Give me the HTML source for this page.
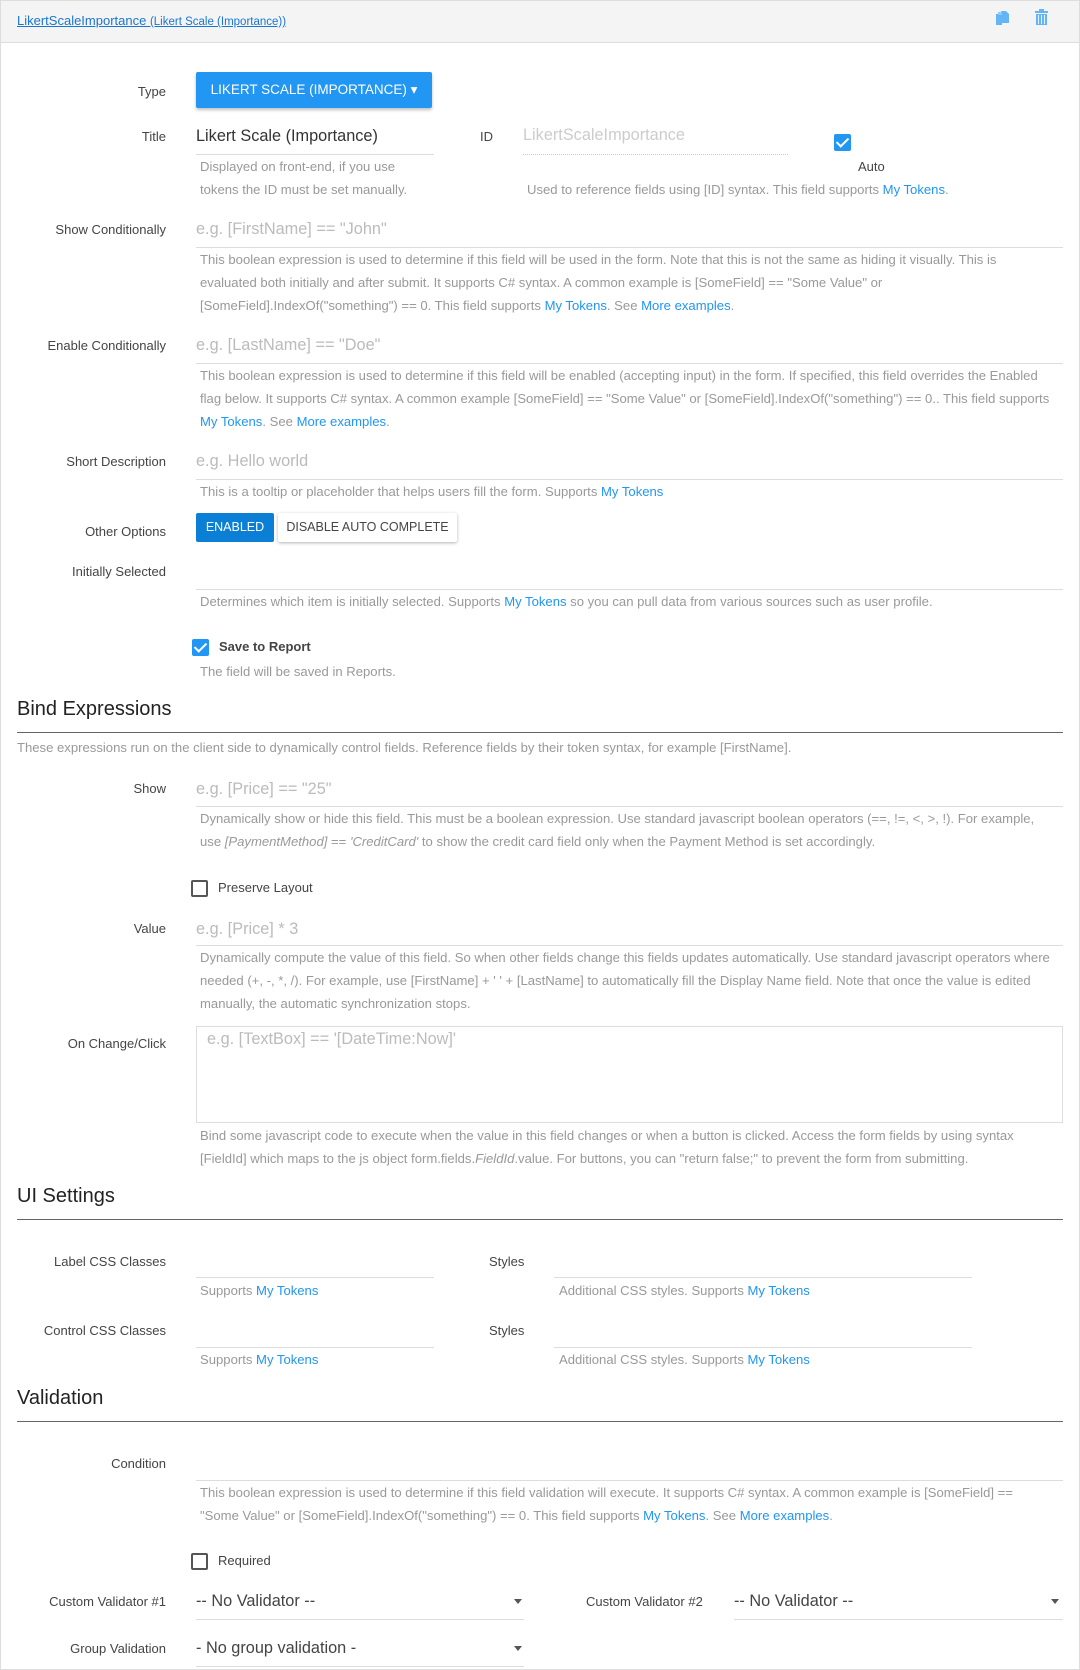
<!DOCTYPE html>
<html><head><meta charset="utf-8"><style>
*{box-sizing:border-box;margin:0;padding:0}
body{width:1080px;height:1670px;position:relative;background:#fff;font-family:"Liberation Sans",sans-serif;overflow:hidden;color:#333}
.a{position:absolute;white-space:nowrap}
.l{position:absolute;right:914px;font-size:13px;color:#444;line-height:16px;white-space:nowrap}
.u{position:absolute;height:1px;background:#ddd}
.p{position:absolute;font-size:16.3px;color:#bbb;line-height:20px;white-space:nowrap}
.h{position:absolute;left:200px;font-size:13.1px;color:#999;line-height:23px;white-space:nowrap}
.h a,.t{color:#2196f3;text-decoration:none}
.sec{position:absolute;left:17px;font-size:20px;color:#222;line-height:24px}
.rule{position:absolute;left:17px;width:1046px;height:1px;background:#666}
.cb{position:absolute;width:17px;height:17px;border:2px solid #555;border-radius:2px}
.cbon{position:absolute;width:17px;height:17px;background:#2196f3;border-radius:2px}
.cbon:after{content:"";position:absolute;left:5px;top:1px;width:5px;height:10px;border:solid #fff;border-width:0 2px 2px 0;transform:rotate(45deg)}
.arr{position:absolute;width:0;height:0;border-left:4px solid transparent;border-right:4px solid transparent;border-top:5px solid #555}
</style></head><body>
<div class="a" style="left:0;top:0;width:1080px;height:1670px;border:1px solid #ddd;border-top:none"></div>
<div class="a" style="left:0;top:0;width:1080px;height:43px;background:#f4f4f4;border:1px solid #ddd"></div>
<div class="a" style="left:17px;top:13px;font-size:13px;color:#1976d2;text-decoration:underline">LikertScaleImportance <span style="font-size:11.5px">(Likert Scale (Importance))</span></div>
<svg class="a" style="left:995px;top:10px" width="14" height="16" viewBox="0 0 14 16"><path d="M1 4h6v11H1z" fill="#64b5f6"/><path d="M6 1h5l3 3v9H6z" fill="#64b5f6"/><path d="M3 2h4v3H3z" fill="#90caf9"/></svg>
<svg class="a" style="left:1035px;top:9px" width="13" height="16" viewBox="0 0 13 16"><path d="M0 2h13v2H0zM4 0h5v2H4zM1 5h11v11H1z" fill="#64b5f6"/><path d="M3.5 6v9M6.5 6v9M9.5 6v9" stroke="#e3f2fd" stroke-width="1"/></svg>

<div class="l" style="top:84px">Type</div>
<div class="a" style="left:196px;top:72px;width:236px;height:36px;background:#2196f3;border-radius:2px;box-shadow:0 2px 3px rgba(0,0,0,.25);color:#fff;font-size:13.5px;line-height:36px;text-align:center">LIKERT SCALE (IMPORTANCE) ▾</div>

<div class="l" style="top:129px">Title</div>
<div class="p" style="left:196px;top:126px;color:#333">Likert Scale (Importance)</div>
<div class="u" style="left:196px;top:154px;width:238px"></div>
<div class="h" style="top:155px">Displayed on front-end, if you use<br>tokens the ID must be set manually.</div>
<div class="a" style="left:480px;top:129px;font-size:13px;color:#444">ID</div>
<div class="p" style="left:523px;top:125px;color:#ccc">LikertScaleImportance</div>
<div class="u" style="left:523px;top:154px;width:265px;background:none;border-top:1px dotted #ccc"></div>
<div class="cbon" style="left:834px;top:134px"></div>
<div class="a" style="left:858px;top:159px;font-size:13px;color:#444">Auto</div>
<div class="h" style="left:527px;top:178px">Used to reference fields using [ID] syntax. This field supports <a>My Tokens</a>.</div>

<div class="l" style="top:222px">Show Conditionally</div>
<div class="p" style="left:196px;top:219px">e.g. [FirstName] == "John"</div>
<div class="u" style="left:196px;top:247px;width:867px"></div>
<div class="h" style="top:248px">This boolean expression is used to determine if this field will be used in the form. Note that this is not the same as hiding it visually. This is<br>evaluated both initially and after submit. It supports C# syntax. A common example is [SomeField] == "Some Value" or<br>[SomeField].IndexOf("something") == 0. This field supports <a>My Tokens</a>. See <a>More examples</a>.</div>

<div class="l" style="top:338px">Enable Conditionally</div>
<div class="p" style="left:196px;top:335px">e.g. [LastName] == "Doe"</div>
<div class="u" style="left:196px;top:363px;width:867px"></div>
<div class="h" style="top:364px">This boolean expression is used to determine if this field will be enabled (accepting input) in the form. If specified, this field overrides the Enabled<br>flag below. It supports C# syntax. A common example [SomeField] == "Some Value" or [SomeField].IndexOf("something") == 0.. This field supports<br><a>My Tokens</a>. See <a>More examples</a>.</div>

<div class="l" style="top:454px">Short Description</div>
<div class="p" style="left:196px;top:451px">e.g. Hello world</div>
<div class="u" style="left:196px;top:479px;width:867px"></div>
<div class="h" style="top:480px">This is a tooltip or placeholder that helps users fill the form. Supports <a>My Tokens</a></div>

<div class="l" style="top:524px">Other Options</div>
<div class="a" style="left:196px;top:513px;width:78px;height:29px;background:#0b7fd6;border-radius:2px;color:#fff;font-size:12.5px;line-height:29px;text-align:center">ENABLED</div>
<div class="a" style="left:278px;top:513px;width:179px;height:29px;background:#fff;border-radius:2px;box-shadow:0 1px 3px rgba(0,0,0,.3);color:#444;font-size:12.5px;line-height:29px;text-align:center">DISABLE AUTO COMPLETE</div>

<div class="l" style="top:564px">Initially Selected</div>
<div class="u" style="left:196px;top:589px;width:867px"></div>
<div class="h" style="top:590px">Determines which item is initially selected. Supports <a>My Tokens</a> so you can pull data from various sources such as user profile.</div>

<div class="cbon" style="left:192px;top:639px"></div>
<div class="a" style="left:219px;top:639px;font-size:13px;color:#444;font-weight:bold;line-height:16px">Save to Report</div>
<div class="h" style="left:200px;top:660px">The field will be saved in Reports.</div>

<div class="sec" style="top:697px">Bind Expressions</div>
<div class="rule" style="top:732px"></div>
<div class="a" style="left:17px;top:740px;font-size:13.1px;color:#999">These expressions run on the client side to dynamically control fields. Reference fields by their token syntax, for example [FirstName].</div>

<div class="l" style="top:781px">Show</div>
<div class="p" style="left:196px;top:779px">e.g. [Price] == "25"</div>
<div class="u" style="left:196px;top:806px;width:867px"></div>
<div class="h" style="top:807px">Dynamically show or hide this field. This must be a boolean expression. Use standard javascript boolean operators (==, !=, &lt;, &gt;, !). For example,<br>use <i>[PaymentMethod]</i> == <i>'CreditCard'</i> to show the credit card field only when the Payment Method is set accordingly.</div>

<div class="cb" style="left:191px;top:880px"></div>
<div class="a" style="left:218px;top:880px;font-size:13px;color:#444;line-height:16px">Preserve Layout</div>

<div class="l" style="top:921px">Value</div>
<div class="p" style="left:196px;top:919px">e.g. [Price] * 3</div>
<div class="u" style="left:196px;top:945px;width:867px"></div>
<div class="h" style="top:946px">Dynamically compute the value of this field. So when other fields change this fields updates automatically. Use standard javascript operators where<br>needed (+, -, *, /). For example, use [FirstName] + ' ' + [LastName] to automatically fill the Display Name field. Note that once the value is edited<br>manually, the automatic synchronization stops.</div>

<div class="l" style="top:1036px">On Change/Click</div>
<div class="a" style="left:196px;top:1026px;width:867px;height:97px;border:1px solid #ddd"></div>
<div class="p" style="left:207px;top:1029px">e.g. [TextBox] == '[DateTime:Now]'</div>
<div class="h" style="top:1124px">Bind some javascript code to execute when the value in this field changes or when a button is clicked. Access the form fields by using syntax<br>[FieldId] which maps to the js object form.fields.<i>FieldId</i>.value. For buttons, you can "return false;" to prevent the form from submitting.</div>

<div class="sec" style="top:1184px">UI Settings</div>
<div class="rule" style="top:1219px"></div>

<div class="l" style="top:1254px">Label CSS Classes</div>
<div class="u" style="left:196px;top:1277px;width:238px"></div>
<div class="h" style="top:1279px">Supports <a>My Tokens</a></div>
<div class="a" style="left:489px;top:1254px;font-size:13px;color:#444">Styles</div>
<div class="u" style="left:554px;top:1277px;width:418px"></div>
<div class="h" style="left:559px;top:1279px">Additional CSS styles. Supports <a>My Tokens</a></div>

<div class="l" style="top:1323px">Control CSS Classes</div>
<div class="u" style="left:196px;top:1347px;width:238px"></div>
<div class="h" style="top:1348px">Supports <a>My Tokens</a></div>
<div class="a" style="left:489px;top:1323px;font-size:13px;color:#444">Styles</div>
<div class="u" style="left:554px;top:1347px;width:418px"></div>
<div class="h" style="left:559px;top:1348px">Additional CSS styles. Supports <a>My Tokens</a></div>

<div class="sec" style="top:1386px">Validation</div>
<div class="rule" style="top:1421px"></div>

<div class="l" style="top:1456px">Condition</div>
<div class="u" style="left:196px;top:1480px;width:867px"></div>
<div class="h" style="top:1481px">This boolean expression is used to determine if this field validation will execute. It supports C# syntax. A common example is [SomeField] ==<br>"Some Value" or [SomeField].IndexOf("something") == 0. This field supports <a>My Tokens</a>. See <a>More examples</a>.</div>

<div class="cb" style="left:191px;top:1553px"></div>
<div class="a" style="left:218px;top:1553px;font-size:13px;color:#444;line-height:16px">Required</div>

<div class="l" style="top:1594px">Custom Validator #1</div>
<div class="p" style="left:196px;top:1591px;color:#444">-- No Validator --</div>
<div class="arr" style="left:514px;top:1599px"></div>
<div class="u" style="left:196px;top:1619px;width:328px"></div>
<div class="a" style="left:586px;top:1594px;font-size:13px;color:#444;line-height:16px">Custom Validator #2</div>
<div class="p" style="left:734px;top:1591px;color:#444">-- No Validator --</div>
<div class="arr" style="left:1051px;top:1599px"></div>
<div class="u" style="left:734px;top:1619px;width:329px"></div>

<div class="l" style="top:1641px">Group Validation</div>
<div class="p" style="left:196px;top:1638px;color:#444">- No group validation -</div>
<div class="arr" style="left:514px;top:1646px"></div>
<div class="u" style="left:196px;top:1666px;width:328px"></div>
</body></html>
